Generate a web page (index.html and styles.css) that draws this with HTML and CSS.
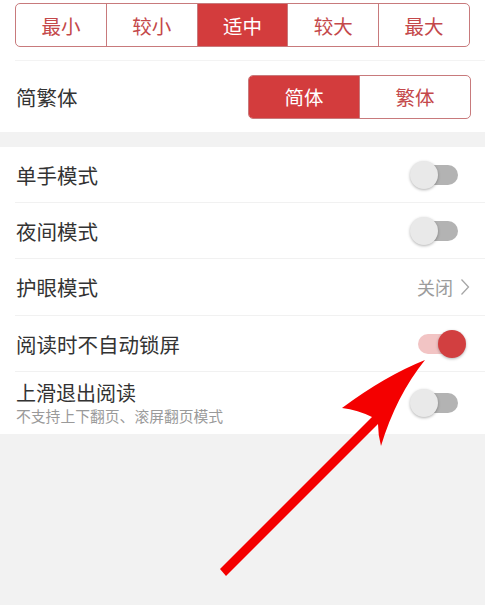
FILE: index.html
```html
<!DOCTYPE html>
<html lang="zh-CN">
<head>
<meta charset="utf-8">
<title>阅读设置</title>
<link rel="stylesheet" href="styles.css">
</head>
<body>
<div class="page">
  <section class="panel top">
    <div class="seg">
      <div class="seg-item">最小</div>
      <div class="seg-item">较小</div>
      <div class="seg-item active">适中</div>
      <div class="seg-item">较大</div>
      <div class="seg-item">最大</div>
    </div>
    <div class="divider"></div>
    <div class="lang-row">
      <span class="label">简繁体</span>
      <div class="seg seg-lang">
        <div class="seg-item active">简体</div>
        <div class="seg-item">繁体</div>
      </div>
    </div>
  </section>
  <div class="gap"></div>
  <section class="panel list">
    <div class="row">
      <span class="label">单手模式</span>
      <span class="toggle"><span class="track"></span><span class="knob"></span></span>
    </div>
    <div class="row">
      <span class="label">夜间模式</span>
      <span class="toggle"><span class="track"></span><span class="knob"></span></span>
    </div>
    <div class="row">
      <span class="label">护眼模式</span>
      <span class="value">关闭<svg class="chev" width="10" height="18" viewBox="0 0 10 18"><polyline points="1.5,1.5 8.5,9 1.5,16.5" fill="none" stroke="#a6a6a6" stroke-width="1.3"/></svg></span>
    </div>
    <div class="row">
      <span class="label">阅读时不自动锁屏</span>
      <span class="toggle on"><span class="track"></span><span class="knob"></span></span>
    </div>
    <div class="row row-last">
      <div class="text-block">
        <div class="label title">上滑退出阅读</div>
        <div class="sub">不支持上下翻页、滚屏翻页模式</div>
      </div>
      <span class="toggle"><span class="track"></span><span class="knob"></span></span>
    </div>
  </section>
</div>
<svg class="arrow" width="485" height="605" viewBox="0 0 485 605">
  <path d="M425 360 Q385 376 342 408 Q358 410 372 417 L220 569 L226 576 L378 424 Q378 435 381 446 Q396 396 425 360 Z" fill="#f40000"/>
</svg>
</body>
</html>
```
FILE: styles.css
```css
* { box-sizing: border-box; }
html, body {
  margin: 0;
  padding: 0;
  background: #f2f2f2;
  font-family: "Noto Sans CJK SC", "Noto Sans", sans-serif;
  color: #333;
}
.page {
  width: 485px;
  min-height: 605px;
  background: #f2f2f2;
}
.panel {
  background: #fff;
}
.top {
  padding-top: 3px;
}
.seg {
  display: flex;
  margin: 0 15px;
  height: 44px;
  border: 1px solid #c87a7c;
  border-radius: 5px;
  overflow: hidden;
}
.seg-item {
  flex: 1;
  display: flex;
  align-items: center;
  justify-content: center;
  font-size: 19.5px;
  color: #c4484a;
  border-left: 1px solid #c87a7c;
}
.seg-item:first-child {
  border-left: none;
}
.seg-item.active {
  background: #d33c3d;
  color: #fff;
}
.divider {
  margin: 13px 0 0 15px;
  height: 1px;
  background: #f3f3f3;
}
.lang-row {
  height: 71px;
  display: flex;
  align-items: center;
  justify-content: space-between;
  padding: 0 14px 0 16px;
}
.seg-lang {
  margin: 0;
  width: 223px;
  height: 44px;
}
.label {
  font-size: 20.5px;
  color: #333;
}
.gap {
  height: 15px;
  background: #f2f2f2;
}
.row {
  margin-left: 15px;
  padding: 0 15px 0 1px;
  height: 56px;
  border-bottom: 1px solid #f1f1f1;
  display: flex;
  align-items: center;
  justify-content: space-between;
}
.row:nth-child(3) {
  height: 57px;
}
.row-last {
  height: 62px;
  border-bottom: none;
}
.text-block {
  display: flex;
  flex-direction: column;
}
.title {
  font-size: 20px;
  line-height: 25px;
}
.sub {
  font-size: 14.8px;
  line-height: 22px;
  color: #9a9a9a;
}
.value {
  display: flex;
  align-items: center;
  font-size: 18px;
  color: #9c9c9c;
}
.chev {
  margin-left: 7px;
}
.toggle {
  position: relative;
  width: 56px;
  height: 28px;
  margin-right: 4px;
  flex: none;
}
.track {
  position: absolute;
  left: 8px;
  top: 4px;
  width: 40px;
  height: 20px;
  border-radius: 10px;
  background: #b3b3b3;
}
.knob {
  position: absolute;
  left: 0;
  top: 0;
  width: 28px;
  height: 28px;
  border-radius: 50%;
  background: #e9e9e9;
  box-shadow: 0 1px 3px rgba(0,0,0,0.3);
}
.toggle.on .track {
  background: #f2c4c4;
}
.toggle.on .knob {
  left: 28px;
  background: #d23f40;
}
.arrow {
  position: absolute;
  left: 0;
  top: 0;
  pointer-events: none;
}
```
